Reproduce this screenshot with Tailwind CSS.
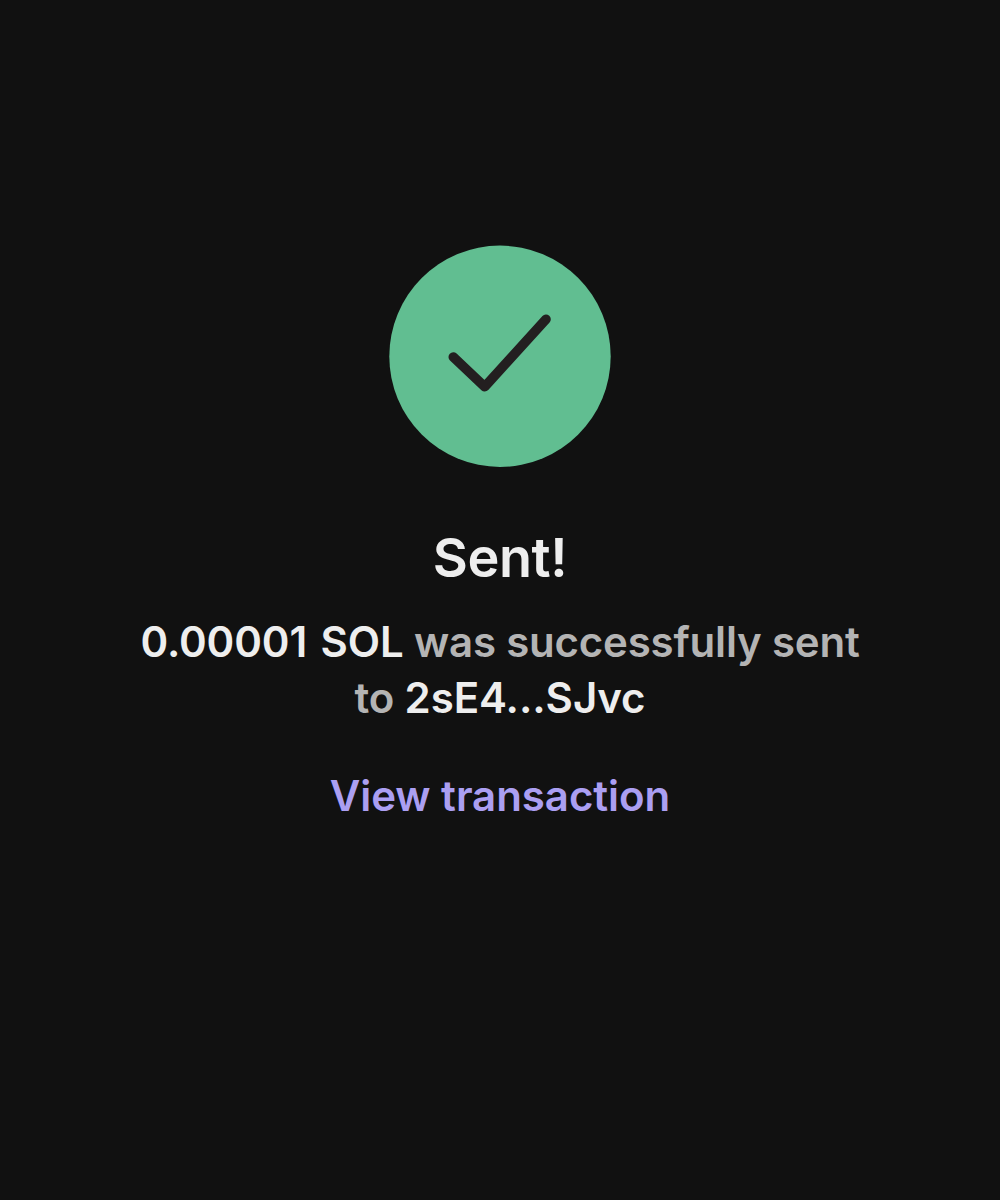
<!DOCTYPE html>
<html lang="en">
  <head>
    <meta charset="UTF-8" />
    <meta name="viewport" content="width=device-width, initial-scale=1.0" />
    <title>Sent</title>
    <script src="https://cdn.jsdelivr.net/npm/@tailwindcss/browser@4"></script>
  </head>
  <body class="bg-[#111111] font-['Inter',sans-serif] antialiased">
    <main class="flex h-[1200px] flex-col items-center pt-[245px] text-center">
      <svg
        class="size-[222px] shrink-0"
        viewBox="0 0 222 222"
        fill="none"
        aria-hidden="true"
      >
        <circle cx="111" cy="111.3" r="110.7" fill="#61BE91" />
        <path
          d="M64.3 112L95.7 141.7L157 74.3"
          stroke="#231F20"
          stroke-width="9.6"
          stroke-linecap="round"
          stroke-linejoin="round"
        />
      </svg>

      <h1
        class="mt-[59px] text-[54px] leading-[64px] font-semibold tracking-[-0.4px] text-[#eeeeee]"
      >
        Sent!
      </h1>

      <p
        class="mt-[24px] text-[42px] leading-[56px] font-semibold tracking-[-0.2px] whitespace-nowrap text-[#b4b4b4]"
      >
        <span class="tracking-[-0.1px] text-[#eeeeee] [word-spacing:3px]"
          >0.00001 SOL</span
        >
        was successfully sent<br />
        to <span class="tracking-[-0.05px] text-[#eeeeee]">2sE4...SJvc</span>
      </p>

      <a
        href="#"
        class="mt-[42px] text-[42px] leading-[56px] font-semibold tracking-[-0.05px] text-[#ab9ff2]"
        >View transaction</a
      >
    </main>
  </body>
</html>
